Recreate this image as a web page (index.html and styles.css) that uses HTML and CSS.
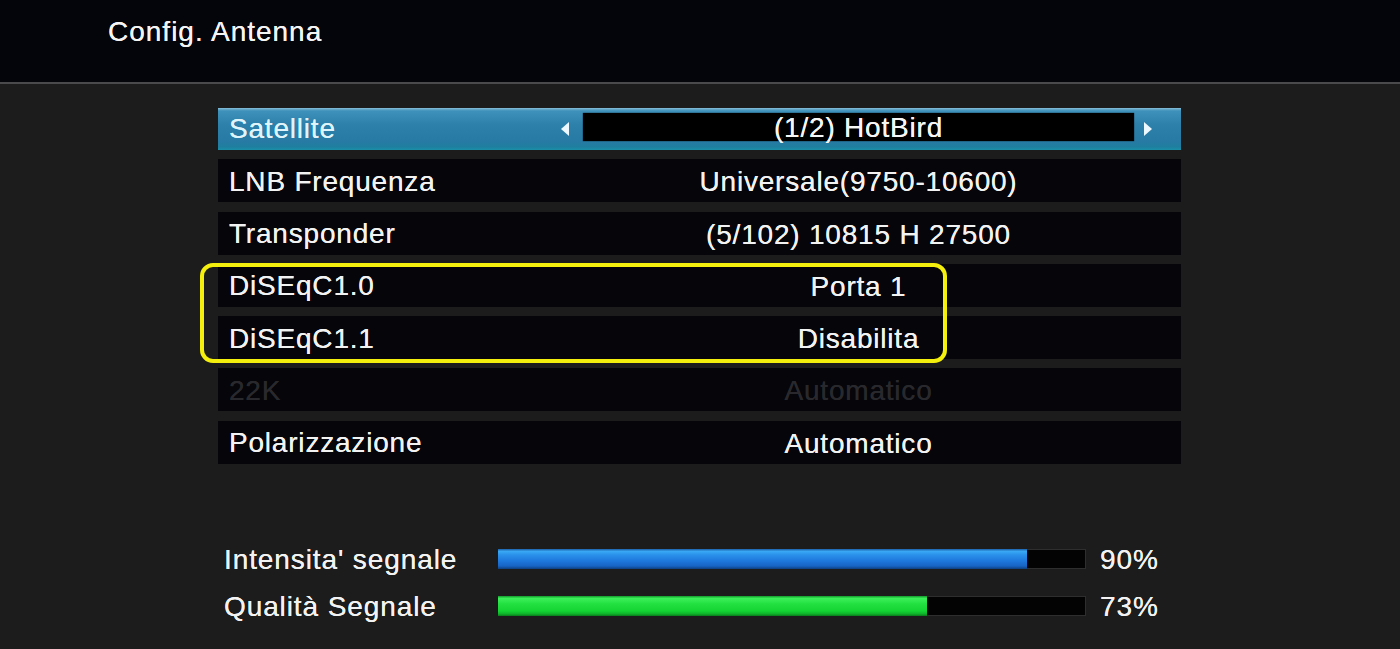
FILE: index.html
```html
<!DOCTYPE html>
<html>
<head>
<meta charset="utf-8">
<link rel="stylesheet" href="styles.css">
</head>
<body>
<div class="header"><span class="title">Config. Antenna</span></div>
<div class="main">
  <div class="rows">
    <div class="row sel">
      <div class="label">Satellite<span class="arrow left"></span></div>
      <div class="value box">(1/2) HotBird</div>
      <div class="tail"><span class="arrow right"></span></div>
    </div>
    <div class="row">
      <div class="label">LNB Frequenza</div>
      <div class="value">Universale(9750-10600)</div>
      <div class="tail"></div>
    </div>
    <div class="row">
      <div class="label">Transponder</div>
      <div class="value">(5/102) 10815 H 27500</div>
      <div class="tail"></div>
    </div>
    <div class="row">
      <div class="label">DiSEqC1.0</div>
      <div class="value">Porta 1</div>
      <div class="tail"></div>
    </div>
    <div class="row">
      <div class="label">DiSEqC1.1</div>
      <div class="value">Disabilita</div>
      <div class="tail"></div>
    </div>
    <div class="row disabled">
      <div class="label">22K</div>
      <div class="value">Automatico</div>
      <div class="tail"></div>
    </div>
    <div class="row">
      <div class="label">Polarizzazione</div>
      <div class="value">Automatico</div>
      <div class="tail"></div>
    </div>
    <div class="highlight"></div>
  </div>
  <div class="signal">
    <div class="sig-row">
      <div class="sig-label">Intensita' segnale</div>
      <div class="track"><div class="fill blue" style="width:90%"></div></div>
      <div class="pct">90%</div>
    </div>
    <div class="sig-row">
      <div class="sig-label">Qualità Segnale</div>
      <div class="track"><div class="fill green" style="width:73%"></div></div>
      <div class="pct">73%</div>
    </div>
  </div>
</div>
</body>
</html>
```
FILE: styles.css
```css
html, body {
  margin: 0;
  padding: 0;
  background: #1c1c1c;
  width: 1400px;
  height: 649px;
  overflow: hidden;
  font-family: "Liberation Sans", Arial, sans-serif;
  color: #f2f2f2;
  letter-spacing: 0.8px;
}
.header {
  height: 82px;
  background: #04040b;
  border-bottom: 2px solid #4a4a4c;
  box-sizing: content-box;
  padding-left: 108px;
}
.title {
  display: block;
  padding-top: 15px;
  font-size: 28px;
  line-height: 34px;
  letter-spacing: 1px;
  color: #f4f4f4;
  text-shadow: 0 0 0.5px #fff;
}
.main {
  padding-top: 24px;
  padding-left: 218px;
}
.rows {
  position: relative;
  width: 963px;
  display: flex;
  flex-direction: column;
  gap: 9.3px;
}
.row {
  height: 43px;
  background: #05050a;
  display: grid;
  grid-template-columns: 1fr 551px 47px;
  align-items: center;
  font-size: 28px;
  line-height: 43px;
  text-shadow: 0 0 0.5px currentColor;
}
.label {
  padding-left: 11px;
  position: relative;
  height: 43px;
  padding-top: 0;
  box-sizing: border-box;
}
.value {
  text-align: center;
  padding-top: 1px;
}
.row.disabled {
  color: #29292d;
}
.row.sel {
  background: linear-gradient(#8cc3dc 0, #6aaccc 1px, #3d91bb 3px, #2c80aa 40%, #267aa4 80%, #1f7fa0 93%, #1a90a8 100%);
  color: #dff4fb;
  height: 42px;
}
.row.sel .label { height: 42px; line-height: 42px; padding-top: 0; }
.value.box {
  background: #000;
  color: #f6f6f6;
  height: 28px;
  line-height: 28px;
  align-self: start;
  margin-top: 5px;
  padding-top: 1px;
  box-sizing: border-box;
  box-shadow: 0 0 1px #000;
}
.tail {
  position: relative;
  height: 100%;
}
.arrow {
  position: absolute;
  top: 14px;
  width: 0;
  height: 0;
  border-top: 7px solid transparent;
  border-bottom: 7px solid transparent;
}
.arrow.left {
  right: 14px;
  border-right: 8px solid #eef8ff;
}
.arrow.right {
  left: 10px;
  border-left: 8px solid #eef8ff;
}
.highlight {
  position: absolute;
  left: -18px;
  top: 155px;
  width: 739px;
  height: 92px;
  border: 4px solid #f4ef0c;
  border-radius: 13px;
}
.signal {
  margin-top: 84px;
  padding-left: 6px;
  display: flex;
  flex-direction: column;
  gap: 27px;
}
.sig-row {
  display: grid;
  grid-template-columns: 274px 588px auto;
  align-items: center;
  height: 20px;
  font-size: 28px;
  line-height: 20px;
  letter-spacing: 0.9px;
  text-shadow: 0 0 0.5px #fff;
}
.sig-label, .pct {
  white-space: nowrap;
  padding-top: 2px;
}
.pct {
  padding-left: 14px;
}
.track {
  height: 20px;
  background: #030303;
  box-shadow: inset 0 0 0 1px #2e2e2e;
  position: relative;
}
.fill {
  height: 100%;
}
.fill.blue {
  background: linear-gradient(#1c5ea8 0, #39a8f4 12%, #2a90ea 30%, #1e78dc 60%, #1764c4 85%, #0e3f80 100%);
}
.fill.green {
  background: linear-gradient(#129a2a 0, #3cf05a 12%, #22e040 40%, #14d434 75%, #0fb02a 90%, #0a7a1c 100%);
}
```
